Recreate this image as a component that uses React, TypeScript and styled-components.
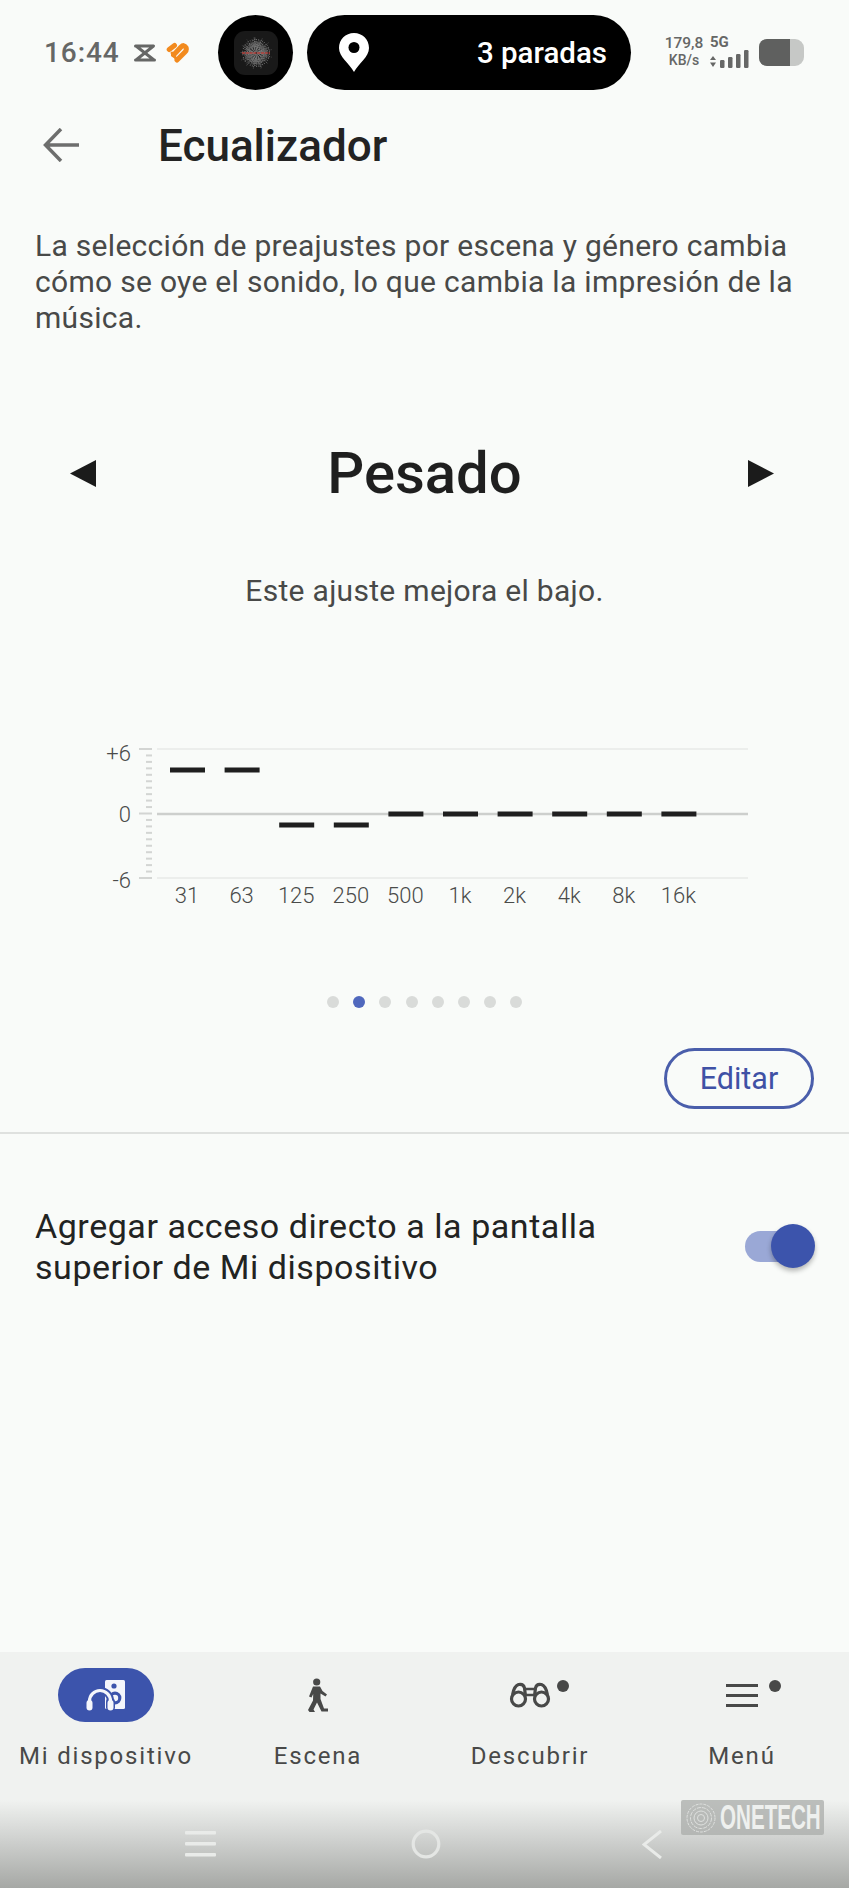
import React from "react";
import styled, { createGlobalStyle } from "styled-components";

const Global = createGlobalStyle`
  html, body { margin: 0; padding: 0; background: #f9fbf9; }
  * { box-sizing: border-box; }
`;

const Screen = styled.div`
  position: relative;
  width: 849px;
  height: 1888px;
  display: flex;
  flex-direction: column;
  overflow: hidden;
  background: #f9fbf9;
  font-family: Roboto, "Liberation Sans", sans-serif;
`;

const StatusBar = styled.div`
  height: 100px;
  padding: 15px 0 0 44px;
  display: flex;
  align-items: flex-start;
`;
const StatusLeft = styled.div`
  width: 174px;
  height: 75px;
  display: flex;
  align-items: center;
  gap: 9px;
`;
const Time = styled.span`
  font-size: 28px;
  font-weight: 500;
  letter-spacing: 0.9px;
  color: #666766;
  margin-right: 4px;
`;
const IslandDot = styled.div`
  width: 75px;
  height: 75px;
  border-radius: 50%;
  background: #000;
  display: flex;
  align-items: center;
  justify-content: center;
`;
const AppTile = styled.div`
  width: 44px;
  height: 44px;
  border-radius: 11px;
  background: #191919;
  display: flex;
  align-items: center;
  justify-content: center;
`;
const IslandPill = styled.div`
  width: 324px;
  height: 75px;
  margin-left: 14px;
  border-radius: 38px;
  background: #000;
  display: flex;
  align-items: center;
  justify-content: space-between;
  padding: 0 24px 0 32px;
`;
const IslandText = styled.span`
  color: #fff;
  font-size: 29.5px;
  font-weight: 500;
`;
const StatusRight = styled.div`
  height: 75px;
  margin-left: 33px;
  display: flex;
  align-items: center;
`;
const Speed = styled.div`
  width: 40px;
  display: flex;
  flex-direction: column;
  align-items: center;
  color: #666766;
  font-weight: 500;
  line-height: 17px;
  margin-top: -2px;
`;
const SpeedValue = styled.span`
  font-size: 15.5px;
`;
const SpeedUnit = styled.span`
  font-size: 14px;
`;
const Net = styled.div`
  margin-left: 6px;
  width: 39px;
  display: flex;
  flex-direction: column;
  color: #666766;
  margin-top: -2px;
`;
const NetLabel = styled.span`
  font-size: 15px;
  font-weight: 700;
  line-height: 15px;
`;
const Battery = styled.div`
  margin-left: 10px;
  width: 45px;
  height: 27px;
  border-radius: 8px 9px 9px 8px;
  overflow: hidden;
  background: #c6c8c6;
  margin-top: -1px;
`;
const BatteryFill = styled.div<{ $level: number }>`
  width: ${(p) => p.$level}%;
  height: 100%;
  background: #5f605f;
`;

const Header = styled.header`
  height: 90px;
  display: flex;
  align-items: center;
  padding-left: 43px;
`;
const Title = styled.h1`
  margin: 2px 0 0 79px;
  font-size: 44px;
  font-weight: 500;
  color: #232323;
`;

const Description = styled.p`
  margin: 38px 0 0;
  padding: 0 35px;
  font-size: 30px;
  line-height: 36px;
  color: #484948;
  letter-spacing: 0.3px;
`;

const PresetRow = styled.div`
  height: 80px;
  margin-top: 97px;
  padding: 0 75px 0 70px;
  display: flex;
  align-items: center;
  justify-content: space-between;
`;
const PresetName = styled.div`
  margin-left: 5px;
  font-size: 58px;
  font-weight: 500;
  color: #1f1f1f;
`;
const PresetHint = styled.div`
  margin-top: 60px;
  text-align: center;
  font-size: 30px;
  line-height: 36px;
  color: #484948;
  letter-spacing: 0.3px;
`;

const Chart = styled.svg`
  display: block;
  margin-top: 131px;
  width: 849px;
  height: 170px;
  font-family: Roboto, "Liberation Sans", sans-serif;
`;

const Dots = styled.div`
  margin-top: 86px;
  height: 12px;
  padding-left: 327px;
  display: flex;
  gap: 14.2px;
`;
const Dot = styled.span<{ $active?: boolean }>`
  width: 12px;
  height: 12px;
  border-radius: 50%;
  background: ${(p) => (p.$active ? "#5068bd" : "#d9dbd9")};
`;

const EditRow = styled.div`
  margin-top: 40px;
  padding-right: 35px;
  display: flex;
  justify-content: flex-end;
`;
const EditButton = styled.button`
  width: 150px;
  height: 61px;
  border-radius: 31px;
  border: 3px solid #4a5eab;
  background: transparent;
  color: #3f51a5;
  font-family: inherit;
  font-size: 30.5px;
  padding: 0;
`;
const Divider = styled.div`
  margin-top: 23px;
  height: 2px;
  background: #dfe1df;
`;

const SettingRow = styled.div`
  margin-top: 72px;
  padding: 0 39px 0 35px;
  display: flex;
  justify-content: space-between;
  align-items: center;
`;
const SettingText = styled.div`
  font-size: 34px;
  line-height: 41px;
  color: #222322;
  letter-spacing: 0.55px;
`;
const Toggle = styled.div`
  position: relative;
  width: 65px;
  height: 31px;
  border-radius: 16px;
  background: #9aa8d6;
  margin-top: -2px;
`;
const Thumb = styled.div`
  position: absolute;
  right: -5px;
  top: -6.5px;
  width: 44px;
  height: 44px;
  border-radius: 50%;
  background: #3c54ac;
  box-shadow: 0 3px 5px rgba(0, 0, 0, 0.28);
`;

const Spacer = styled.div`
  flex: 1;
`;

const Nav = styled.nav`
  height: 148px;
  background: #f0f2f0;
  display: grid;
  grid-template-columns: repeat(4, 212px);
`;
const NavItem = styled.div`
  display: flex;
  flex-direction: column;
  align-items: center;
  padding-top: 16px;
`;
const NavIcon = styled.div<{ $active?: boolean }>`
  position: relative;
  width: 96px;
  height: 54px;
  border-radius: 27px;
  background: ${(p) => (p.$active ? "#3c54ac" : "transparent")};
  display: flex;
  align-items: center;
  justify-content: center;
`;
const Badge = styled.span`
  position: absolute;
  top: 12px;
  right: 9px;
  width: 12px;
  height: 12px;
  border-radius: 50%;
  background: #484948;
`;
const NavLabel = styled.span`
  margin-top: 19px;
  font-size: 24px;
  line-height: 30px;
  letter-spacing: 1.8px;
  color: #484948;
`;

const SystemBar = styled.div`
  height: 88px;
  background: linear-gradient(#f0f2f0, #cfd1cf 45%, #a6a8a5);
  display: grid;
  grid-template-columns: 1fr 1fr 1fr;
  padding: 0 84px 0 88px;
  align-items: center;
  justify-items: center;
`;
const Watermark = styled.div`
  position: absolute;
  left: 681px;
  top: 1800px;
  width: 143px;
  height: 35px;
  border-radius: 2px;
  background: rgba(170, 172, 170, 0.75);
  display: flex;
  align-items: center;
  padding-left: 5px;
  gap: 4px;
`;
const WatermarkText = styled.span`
  display: inline-block;
  flex: none;
  color: #eef0ee;
  font-family: "Liberation Sans", sans-serif;
  font-weight: 700;
  font-size: 20px;
  line-height: 35px;
  transform: scale(1.03, 1.75);
  transform-origin: left center;
`;
const WatermarkMark = styled.svg`
  flex: none;
  width: 30px;
  height: 30px;
`;

const ticks = Array.from({ length: 21 }, (_, i) => i);
const bands = [
  { label: "31", y: 770 },
  { label: "63", y: 770 },
  { label: "125", y: 825 },
  { label: "250", y: 825 },
  { label: "500", y: 814 },
  { label: "1k", y: 814 },
  { label: "2k", y: 814 },
  { label: "4k", y: 814 },
  { label: "8k", y: 814 },
  { label: "16k", y: 814 },
];

const EqChart = () => (
  <Chart viewBox="0 740 849 170">
    <line x1="157" x2="748" y1="749" y2="749" stroke="#eceeec" strokeWidth="2" />
    <line x1="157" x2="748" y1="814" y2="814" stroke="#cdcfcd" strokeWidth="2.5" />
    <line x1="157" x2="748" y1="878" y2="878" stroke="#eceeec" strokeWidth="2" />
    {ticks.map((i) => {
      const major = i % 10 === 0;
      const y = 749 + i * 6.45;
      return (
        <line key={i} x1={major ? 139 : 146} x2="152" y1={y} y2={y} stroke="#d3d5d3" strokeWidth="2" />
      );
    })}
    <g fontSize="22" fontWeight="300" fill="#4a4b4a" textAnchor="end">
      <text x="131" y="761">+6</text>
      <text x="131" y="822">0</text>
      <text x="131" y="888">-6</text>
    </g>
    {bands.map((b, i) => {
      const x = 170 + i * 54.6;
      return (
        <g key={b.label}>
          <rect x={x} y={b.y - 2.5} width="35" height="5" fill="#1f1f1f" />
          <text x={x + 17} y="903" fontSize="22" fontWeight="300" fill="#4a4b4a" textAnchor="middle">
            {b.label}
          </text>
        </g>
      );
    })}
  </Chart>
);

const Noise = () => {
  const rays = Array.from({ length: 120 }, (_, i) => {
    const a = (i / 120) * Math.PI * 2 + i * 0.37;
    const inner = 1 + ((i * 7) % 8);
    const outer = 9 + ((i * 13) % 8);
    return {
      x1: 22 + Math.cos(a) * inner,
      y1: 22 + Math.sin(a) * inner,
      x2: 22 + Math.cos(a) * outer,
      y2: 22 + Math.sin(a) * outer,
    };
  });
  return (
    <svg width="44" height="44" viewBox="0 0 44 44">
      {rays.map((r, i) => (
        <line key={i} {...r} stroke="#8a8a8a" strokeWidth="0.7" strokeDasharray="1.4 1" />
      ))}
      <line x1="8" x2="36" y1="22" y2="22" stroke="#b5413c" strokeWidth="1.5" strokeDasharray="3 0.8" />
    </svg>
  );
};

const CapCutIcon = () => (
  <svg width="24" height="20" viewBox="0 0 24 20" fill="none" stroke="#666766" strokeWidth="3" strokeLinejoin="round" strokeLinecap="round">
    <path d="M2.5 3 H20 M2.5 17 H21.5 M3 3 L21 17 M20.5 3 L3 17" />
  </svg>
);
const HeartIcon = () => (
  <svg width="23" height="21" viewBox="0 0 23 21" fill="none" stroke="#f28a1e" strokeWidth="5" strokeLinecap="round" strokeLinejoin="round">
    <path d="M3.2 7.5 L8.5 3.5" />
    <path d="M7.5 13 L15 5 Q18 2 20 5.5 Q21 8 19 10 L11 18" />
    <path d="M6 11 L11 18" strokeWidth="3" />
  </svg>
);
const PinIcon = () => (
  <svg width="30" height="39" viewBox="0 0 30 39">
    <path fill="#fff" d="M15 0 C6.5 0 0 6.5 0 15 C0 24 10 30 15 39 C20 30 30 24 30 15 C30 6.5 23.5 0 15 0Z" />
    <circle cx="15" cy="14.5" r="5.5" fill="#000" />
  </svg>
);
const NetArrowsBars = () => (
  <svg width="39" height="18" viewBox="0 0 39 18" fill="#666766">
    <path d="M3 6 L6 10 H0Z M3 17 L0 12.5 H6Z" />
    <rect x="10" y="10" width="4.5" height="8" rx="1.2" />
    <rect x="18" y="7" width="4.5" height="11" rx="1.2" />
    <rect x="26" y="4" width="4.5" height="14" rx="1.2" />
    <rect x="34" y="0" width="4.5" height="18" rx="1.2" />
  </svg>
);
const BackIcon = () => (
  <svg width="36" height="34" viewBox="0 0 36 34" fill="none" stroke="#6d6e6d" strokeWidth="3.5">
    <path d="M36 17 H3 M18 1 L2.5 17 L18 33" />
  </svg>
);
const Triangle = ({ right }: { right?: boolean }) => (
  <svg width="26" height="27" viewBox="0 0 26 27" fill="#1b1b1b">
    <path d={right ? "M0 0 L26 13.5 L0 27Z" : "M26 0 L0 13.5 L26 27Z"} />
  </svg>
);
const DeviceIcon = () => (
  <svg width="40" height="31" viewBox="0 0 40 31">
    <rect x="19" y="0" width="20" height="29" rx="1.5" fill="#f4f6fb" />
    <circle cx="28" cy="6" r="2.6" fill="#3c54ac" />
    <circle cx="29" cy="18" r="6.4" fill="#3c54ac" />
    <circle cx="29" cy="18" r="3.2" fill="#f4f6fb" />
    <path d="M3.5 24 V21 A10.5 10.5 0 0 1 24.5 21 V24" fill="none" stroke="#3c54ac" strokeWidth="7" />
    <rect x="-1" y="18" width="9" height="13.5" rx="4" fill="#3c54ac" />
    <rect x="20" y="18" width="9" height="13.5" rx="4" fill="#3c54ac" />
    <path d="M3.5 24 V21 A10.5 10.5 0 0 1 24.5 21 V24" fill="none" stroke="#f4f6fb" strokeWidth="3.2" />
    <rect x="0.5" y="20" width="6" height="10.5" rx="3" fill="#f4f6fb" />
    <rect x="21.5" y="20" width="6" height="10.5" rx="3" fill="#f4f6fb" />
  </svg>
);
const WalkIcon = () => (
  <svg width="20" height="35" viewBox="0 0 20 35" fill="#484948">
    <circle cx="8.7" cy="4" r="3.6" />
    <path d="M5 8.5 H12 L14.5 13 L19 16.5 L17.5 18.5 L12.5 15.5 L12.5 21 L16 30.5 H20 V33.5 H13.5 L9 24.5 L5.5 31.5 L7 34 H1.5 L0 32 L5 22.5 L5.2 16 L3.5 19.5 L1 18.5 Z" />
  </svg>
);
const BinocularsIcon = () => (
  <svg width="42" height="26" viewBox="0 0 42 26" fill="none" stroke="#484948" strokeWidth="3.2">
    <circle cx="9.5" cy="17" r="7" />
    <circle cx="32.5" cy="17" r="7" />
    <path d="M3.5 13 Q5 4 9.5 2.5 Q14.5 1.5 15.5 6 L16.5 14 M38.5 13 Q37 4 32.5 2.5 Q27.5 1.5 26.5 6 L25.5 14" />
    <path d="M16 7 H26 M16.5 13 H25.5" strokeWidth="2.5" />
  </svg>
);
const MenuIcon = () => (
  <svg width="32" height="23" viewBox="0 0 32 23" fill="#484948">
    <rect y="0" width="32" height="3" />
    <rect y="10" width="32" height="3" />
    <rect y="20" width="32" height="3" />
  </svg>
);
const SysMenu = () => (
  <svg width="31" height="26" viewBox="0 0 31 26" fill="#e9ebe9">
    <rect y="0" width="31" height="3.5" rx="1" />
    <rect y="11" width="31" height="3.5" rx="1" />
    <rect y="22" width="31" height="3.5" rx="1" />
  </svg>
);
const SysHome = () => (
  <svg width="30" height="30" viewBox="0 0 30 30" fill="none" stroke="#e4e6e4" strokeWidth="3.2">
    <circle cx="15" cy="15" r="12.8" />
  </svg>
);
const SysBack = () => (
  <svg width="20" height="29" viewBox="0 0 20 29" fill="none" stroke="#e9ebe9" strokeWidth="3">
    <path d="M19 1 L2 14.5 L19 28" />
  </svg>
);
const WatermarkLogo = () => (
  <WatermarkMark viewBox="0 0 30 30" fill="none" stroke="#dfe1df" strokeWidth="1">
    <circle cx="15" cy="15" r="14" strokeDasharray="3 1" />
    <circle cx="15" cy="15" r="10.5" strokeDasharray="4 1" />
    <circle cx="15" cy="15" r="7" />
    <circle cx="15" cy="15" r="3.5" />
  </WatermarkMark>
);

export default function App() {
  return (
    <Screen>
      <Global />
      <StatusBar>
        <StatusLeft>
          <Time>16:44</Time>
          <CapCutIcon />
          <HeartIcon />
        </StatusLeft>
        <IslandDot>
          <AppTile>
            <Noise />
          </AppTile>
        </IslandDot>
        <IslandPill>
          <PinIcon />
          <IslandText>3 paradas</IslandText>
        </IslandPill>
        <StatusRight>
          <Speed>
            <SpeedValue>179,8</SpeedValue>
            <SpeedUnit>KB/s</SpeedUnit>
          </Speed>
          <Net>
            <NetLabel>5G</NetLabel>
            <NetArrowsBars />
          </Net>
          <Battery>
            <BatteryFill $level={69} />
          </Battery>
        </StatusRight>
      </StatusBar>

      <Header>
        <BackIcon />
        <Title>Ecualizador</Title>
      </Header>

      <Description>
        La selección de preajustes por escena y género cambia
        <br />
        cómo se oye el sonido, lo que cambia la impresión de la
        <br />
        música.
      </Description>

      <PresetRow>
        <Triangle />
        <PresetName>Pesado</PresetName>
        <Triangle right />
      </PresetRow>
      <PresetHint>Este ajuste mejora el bajo.</PresetHint>

      <EqChart />

      <Dots>
        {Array.from({ length: 8 }, (_, i) => (
          <Dot key={i} $active={i === 1} />
        ))}
      </Dots>

      <EditRow>
        <EditButton>Editar</EditButton>
      </EditRow>
      <Divider />

      <SettingRow>
        <SettingText>
          Agregar acceso directo a la pantalla
          <br />
          superior de Mi dispositivo
        </SettingText>
        <Toggle>
          <Thumb />
        </Toggle>
      </SettingRow>

      <Spacer />

      <Nav>
        <NavItem>
          <NavIcon $active>
            <DeviceIcon />
          </NavIcon>
          <NavLabel>Mi dispositivo</NavLabel>
        </NavItem>
        <NavItem>
          <NavIcon>
            <WalkIcon />
          </NavIcon>
          <NavLabel>Escena</NavLabel>
        </NavItem>
        <NavItem>
          <NavIcon>
            <BinocularsIcon />
            <Badge />
          </NavIcon>
          <NavLabel>Descubrir</NavLabel>
        </NavItem>
        <NavItem>
          <NavIcon>
            <MenuIcon />
            <Badge />
          </NavIcon>
          <NavLabel>Menú</NavLabel>
        </NavItem>
      </Nav>
      <SystemBar>
        <SysMenu />
        <SysHome />
        <SysBack />
      </SystemBar>
      <Watermark>
        <WatermarkLogo />
        <WatermarkText>ONETECH</WatermarkText>
      </Watermark>
    </Screen>
  );
}
